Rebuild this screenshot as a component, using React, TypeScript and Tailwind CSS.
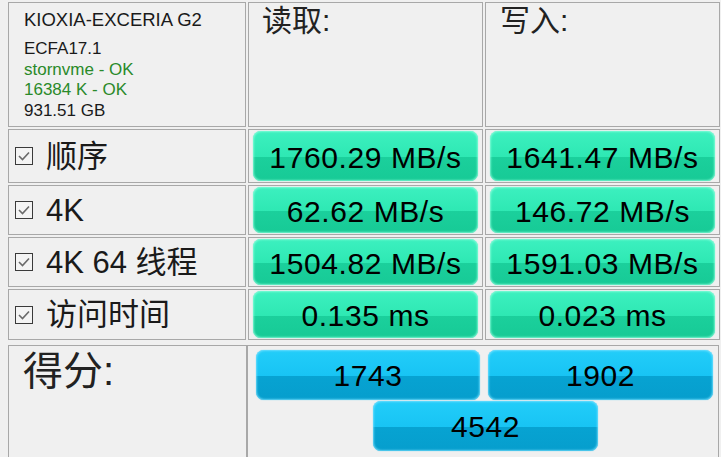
import React from "react";

const SANS = "font-['Liberation_Sans','Noto_Sans_CJK_SC',sans-serif]";

type Row = { label: string; read: string; write: string; h: string };

const ROWS: Row[] = [
  { label: "顺序", read: "1760.29 MB/s", write: "1641.47 MB/s", h: "h-[54px]" },
  { label: "4K", read: "62.62 MB/s", write: "146.72 MB/s", h: "h-[50px]" },
  { label: "4K 64 线程", read: "1504.82 MB/s", write: "1591.03 MB/s", h: "h-[50px]" },
  { label: "访问时间", read: "0.135 ms", write: "0.023 ms", h: "h-[51px]" },
];

function CheckBox() {
  return (
    <svg width="18" height="18" viewBox="0 0 18 18" className="shrink-0">
      <rect x="0.5" y="0.5" width="17" height="17" fill="#f4f4f4" stroke="#3a3a3a" />
      <path d="M4 9 L7.5 12.5 L14 5.5" fill="none" stroke="#6a6a6a" strokeWidth="1.6" />
    </svg>
  );
}

// green result pill
function Value({ text }: { text: string }) {
  return (
    <div className="h-full rounded-[8px] bg-[linear-gradient(to_bottom,#3cf0bf_0%,#2ee8b3_53%,#1bd09c_53%,#17ca96_100%)] shadow-[inset_0_0_2px_1px_rgba(140,255,220,0.8),0_0_1px_#4fe9bd] flex items-center justify-center pt-[3px]">
      <span className="text-[30px] leading-none tracking-[0.6px] text-black">{text}</span>
    </div>
  );
}

// blue score pill
function Score({ text, w }: { text: string; w: string }) {
  return (
    <div className={`${w} h-[50px] rounded-[8px] bg-[linear-gradient(to_bottom,#22cdf9_0%,#18c4f4_52%,#07a3d2_52%,#069ecd_100%)] shadow-[inset_0_0_2px_1px_rgba(120,225,255,0.8),0_0_1px_#3fcaf5] flex items-center justify-center pt-[2px]`}>
      <span className="text-[30px] leading-none tracking-[0.6px] text-black">{text}</span>
    </div>
  );
}

export default function App() {
  return (
    <div className={`w-[721px] h-[457px] overflow-hidden bg-[#f0f0f0] pl-[8px] pt-[2px] ${SANS}`}>
      <div className="grid grid-cols-[238px_235px_235px] gap-[2px]">
        {/* Header row */}
        <div className="h-[125px] border border-[#a8a8a8] pl-[15px] pt-[6px] text-[#1a1a1a]">
          <div className="text-[18.5px] leading-[22px]">KIOXIA-EXCERIA G2</div>
          <div className="mt-[8px] text-[17px] leading-[20.5px]">
            <div>ECFA17.1</div>
            <div className="text-[#2a8a2a]">stornvme - OK</div>
            <div className="text-[#2a8a2a]">16384 K - OK</div>
            <div>931.51 GB</div>
          </div>
        </div>
        <div className="h-[125px] border border-[#a8a8a8] pl-[13px] pt-[1px]">
          <span className="text-[30px] leading-[34px] text-[#222]">读取:</span>
        </div>
        <div className="h-[125px] border border-[#a8a8a8] pl-[14px] pt-[1px]">
          <span className="text-[30px] leading-[34px] text-[#222]">写入:</span>
        </div>

        {ROWS.map((r) => (
          <React.Fragment key={r.label}>
            <div className={`${r.h} border border-[#a8a8a8] pl-[6px] flex items-center gap-[13px]`}>
              <CheckBox />
              <span className="text-[31px] leading-none text-[#1a1a1a] whitespace-pre">{r.label}</span>
            </div>
            <div className={`${r.h} border border-[#a8a8a8] px-[4px] py-[1px]`}>
              <Value text={r.read} />
            </div>
            <div className={`${r.h} border border-[#a8a8a8] px-[4px] py-[1px]`}>
              <Value text={r.write} />
            </div>
          </React.Fragment>
        ))}
      </div>

      {/* Score section */}
      <div className="mt-[5px] flex h-[130px]">
        <div className="w-[239px] border border-[#a8a8a8] pl-[14px] pt-[2px]">
          <span className="text-[40px] leading-[46px] text-[#222]">得分:</span>
        </div>
        <div className="w-[472px] border border-[#a8a8a8] pl-[8px] pt-[4px]">
          <div className="flex gap-[8px]">
            <Score text="1743" w="w-[224px]" />
            <Score text="1902" w="w-[225px]" />
          </div>
          <div className="pl-[117px] mt-[1px]">
            <Score text="4542" w="w-[225px]" />
          </div>
        </div>
      </div>
    </div>
  );
}
